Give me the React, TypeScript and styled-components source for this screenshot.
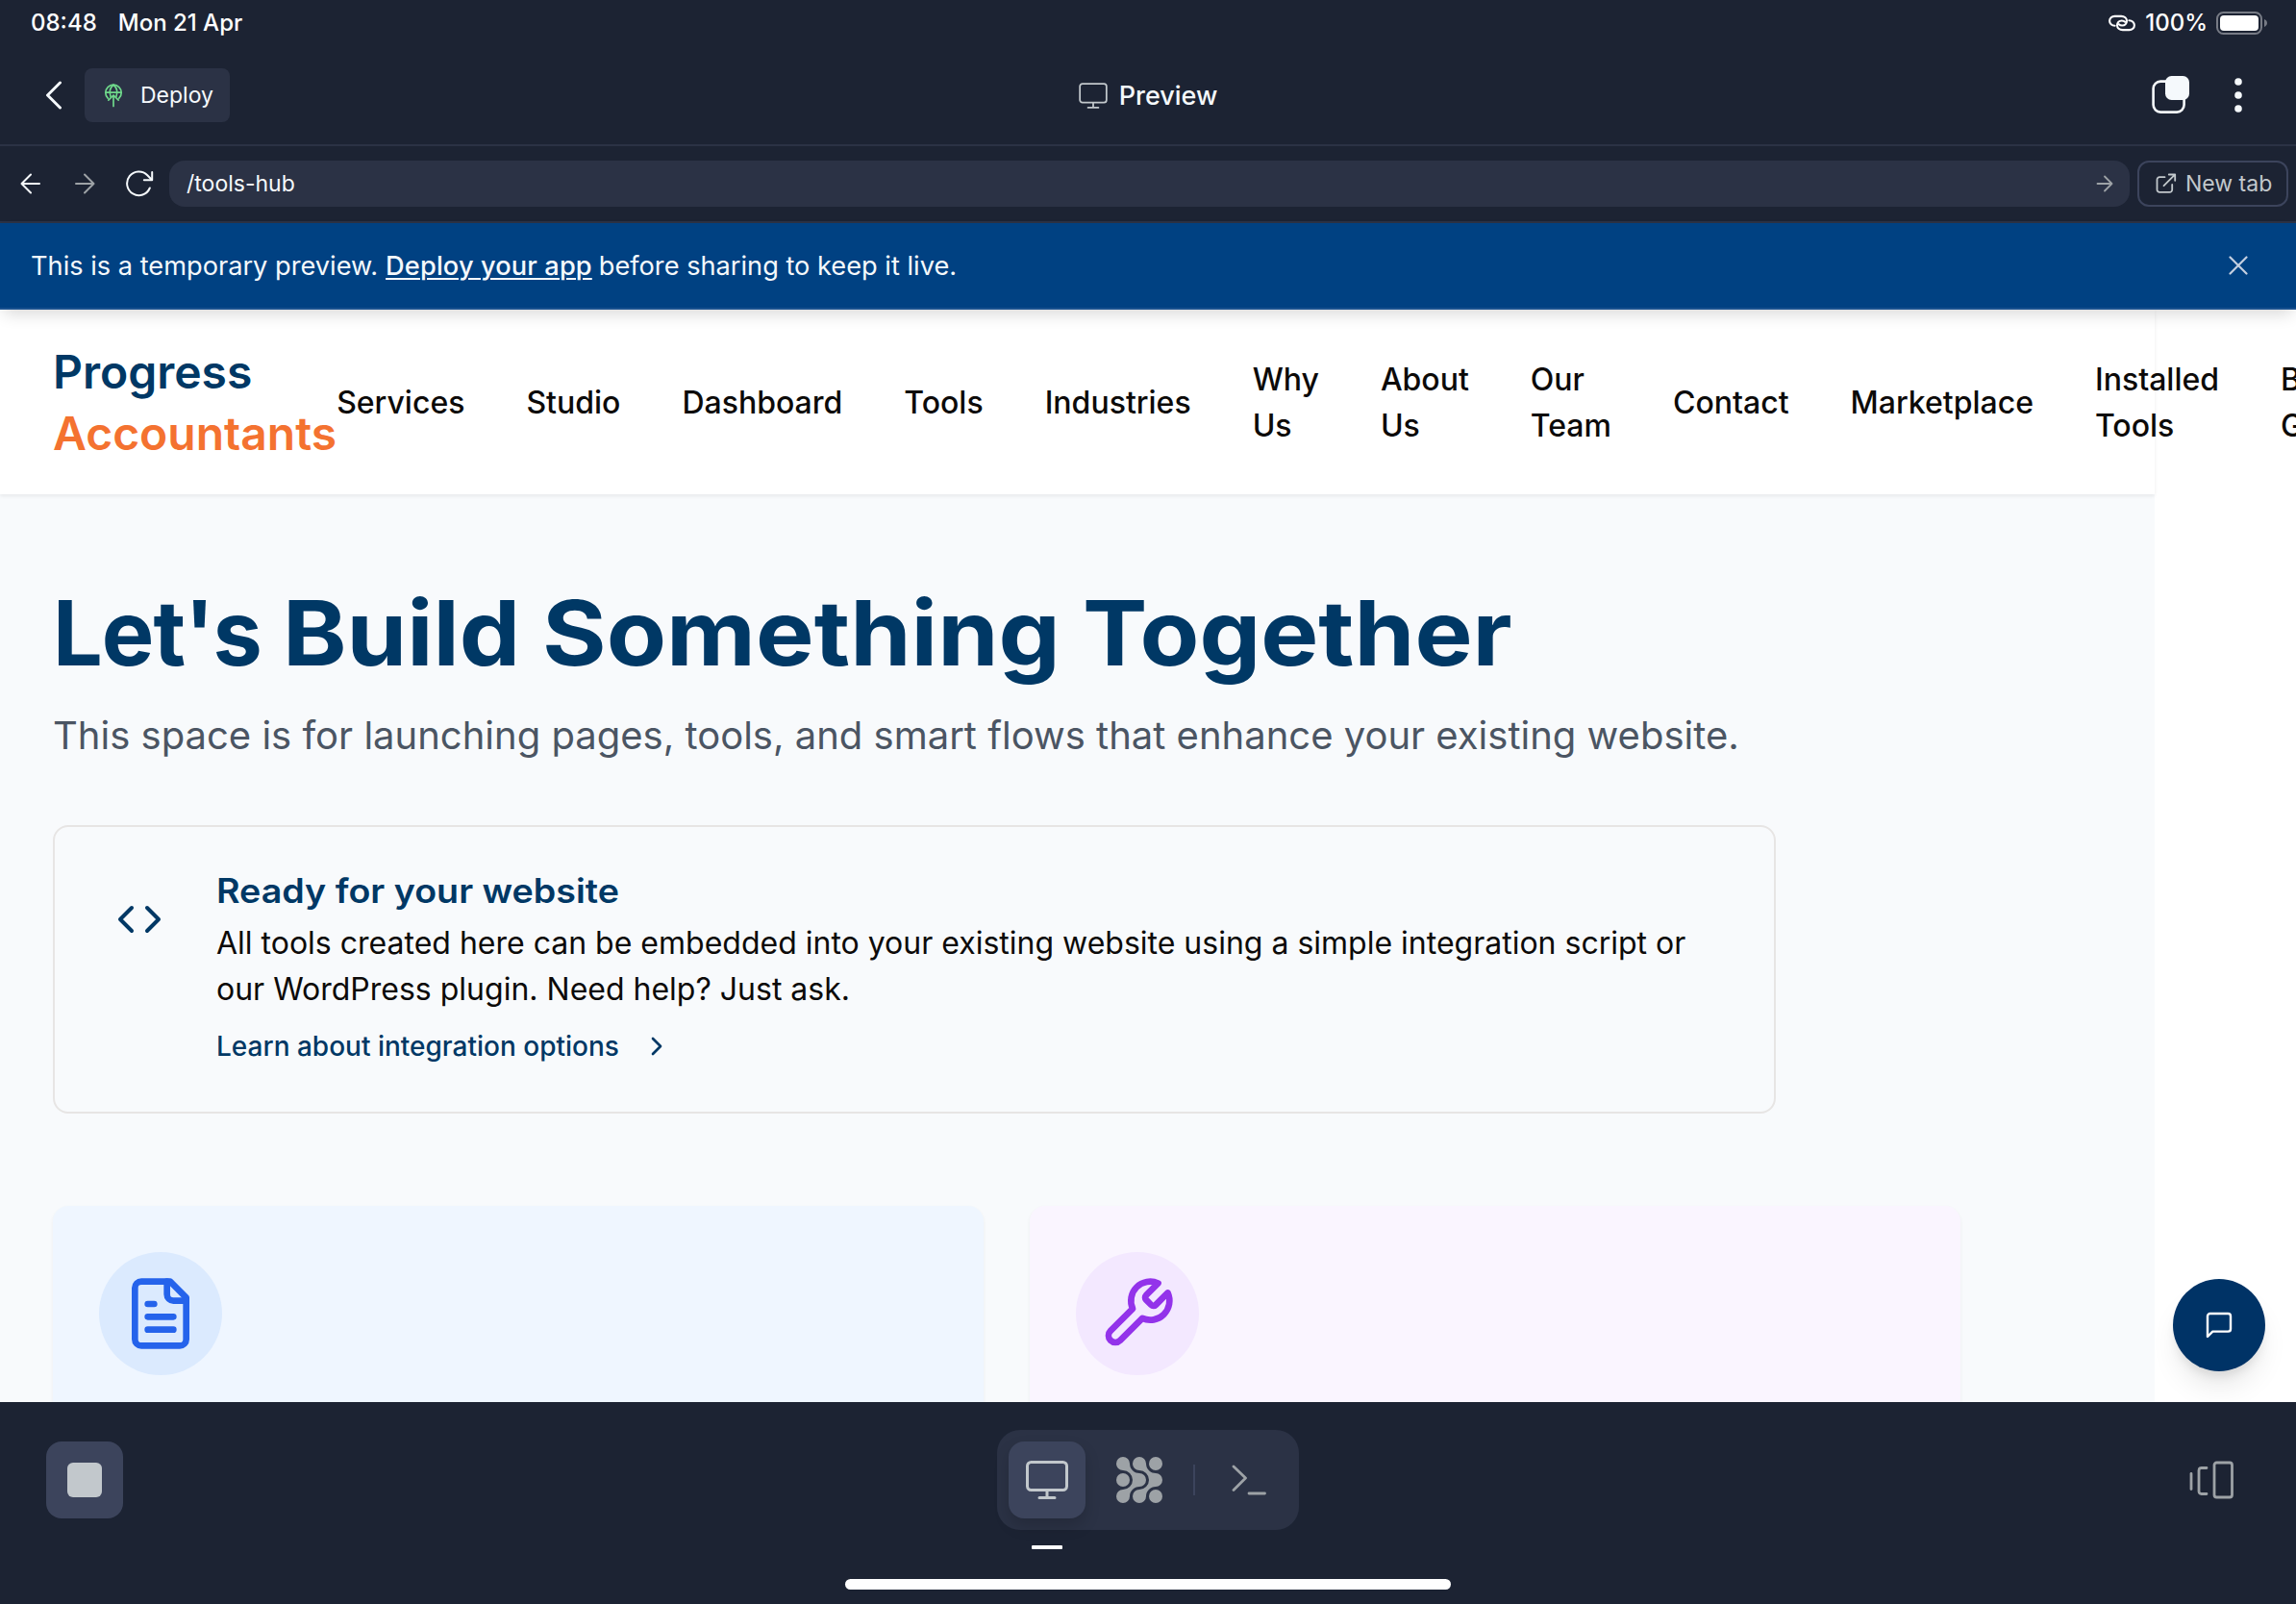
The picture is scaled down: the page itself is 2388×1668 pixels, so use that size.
import React from 'react';
import styled, { createGlobalStyle } from 'styled-components';

const Global = createGlobalStyle`
  * { box-sizing: border-box; }
  body { margin: 0; background: #1c2333; font-family: Inter, "Liberation Sans", sans-serif; overflow: hidden; }
  svg { display: block; flex: none; }
`;

const Screen = styled.div`
  display: flex;
  flex-direction: column;
  width: 2388px;
  height: 1668px;
  background: #1c2333;
  overflow: hidden;
`;

/* ---------- Status bar ---------- */
const StatusBar = styled.div`
  display: flex;
  align-items: center;
  height: 48px;
  padding: 0 29px 1px 32px;
  color: #fff;
  font-size: 24px;
  font-weight: 500;
`;
const StatusText = styled.span<{ $before?: number; $after?: number }>`
  margin: 0 ${(p) => p.$after ?? 0}px 0 ${(p) => p.$before ?? 0}px;
  white-space: nowrap;
`;
const Spacer = styled.div`
  flex: 1;
`;

/* ---------- Title bar ---------- */
const TitleBar = styled.header`
  display: grid;
  grid-template-columns: 1fr auto 1fr;
  align-items: center;
  height: 104px;
  padding: 0 47px;
  border-bottom: 2px solid #2b3245;
`;
const TitleSide = styled.div<{ $end?: boolean }>`
  display: flex;
  align-items: center;
  justify-content: ${(p) => (p.$end ? 'flex-end' : 'flex-start')};
  gap: ${(p) => (p.$end ? 46 : 23)}px;
  padding-right: ${(p) => (p.$end ? 9 : 0)}px;
`;
const DeployButton = styled.button`
  display: flex;
  align-items: center;
  gap: 18px;
  width: 151px;
  height: 56px;
  padding: 0 0 0 20px;
  border: 0;
  border-radius: 8px;
  background: #2b3245;
  color: #f5f9fc;
  font: 400 23px Inter, sans-serif;
`;
const Title = styled.div`
  display: flex;
  align-items: center;
  gap: 12px;
  color: #f5f9fc;
  font-size: 27px;
  font-weight: 500;
`;

/* ---------- Browser bar ---------- */
const BrowserBar = styled.div`
  display: flex;
  align-items: center;
  height: 80px;
  padding: 0 8px 0 20px;
  border-bottom: 2px solid #2b3245;
`;
const NavIcons = styled.div`
  display: grid;
  grid-template-columns: 56px 53px 32px;
  align-items: center;
  width: 156px;
`;
const UrlField = styled.div`
  display: flex;
  align-items: center;
  justify-content: space-between;
  flex: 1;
  height: 48px;
  padding: 0 17px 0 18px;
  border-radius: 16px;
  background: #2b3245;
  color: #f5f9fc;
  font-size: 23px;
`;
const NewTab = styled.button`
  display: flex;
  align-items: center;
  gap: 9px;
  width: 157px;
  height: 48px;
  margin-left: 8px;
  padding: 0 0 0 17px;
  border: 2px solid #3c445c;
  border-radius: 12px;
  background: transparent;
  color: #c2c8cc;
  font: 400 23px Inter, sans-serif;
  white-space: nowrap;
`;

/* ---------- Banner ---------- */
const Banner = styled.div`
  position: relative;
  z-index: 2;
  display: flex;
  align-items: center;
  flex: none;
  height: 90px;
  padding: 0 50px 0 32px;
  background: #004182;
  border-bottom: 2px solid #1a5290;
  box-shadow: 0 8px 16px -4px rgba(0, 0, 0, 0.16);
  color: #f5f9fc;
  font-size: 27.2px;
`;
const DeployLink = styled.a`
  margin: 0 7px 0 8px;
  font-weight: 500;
  letter-spacing: 0.13px;
  text-decoration: underline;
  text-decoration-thickness: 2px;
  text-underline-offset: 3px;
`;

/* ---------- Previewed page ---------- */
const Viewport = styled.div`
  position: relative;
  flex: none;
  height: 1136px;
  background: #fff;
  overflow: hidden;
`;
const Page = styled.div`
  width: 2241px;
  height: 1136px;
  background: #f8fafc;
`;
const SiteHeader = styled.div`
  position: relative;
  display: flex;
  align-items: center;
  width: 2241px;
  height: 192px;
  padding: 2px 55px 0;
  background: #fff;
  box-shadow: 0 2px 4px rgba(0, 0, 0, 0.07);
`;
const Logo = styled.div`
  display: flex;
  flex-direction: column;
  flex: none;
  font-size: 48px;
  font-weight: 600;
  line-height: 64px;
`;
const LogoWord = styled.span<{ $accent?: boolean }>`
  color: ${(p) => (p.$accent ? '#f47230' : '#003865')};
`;
const SiteNav = styled.nav`
  display: flex;
  align-items: center;
  gap: 64px;
  flex: none;
`;
const NavItem = styled.a`
  width: min-content;
  color: #0c0a09;
  font-size: 32px;
  font-weight: 500;
  line-height: 48px;
`;
const Main = styled.main`
  padding: 96px 55px 0;
`;
const Headline = styled.h1`
  display: flex;
  margin: 0;
  color: #003865;
  font-size: 94px;
  font-weight: 700;
  line-height: 96px;
  white-space: pre;
`;
const HeadWord = styled.span<{ $w: number; $stretch: number; $track?: number }>`
  flex: none;
  width: ${(p) => p.$w}px;
  letter-spacing: ${(p) => p.$track ?? 0}px;
  transform: scaleX(${(p) => p.$stretch});
  transform-origin: left;
`;
const Lead = styled.p`
  margin: 31px 0 0;
  color: #4b5563;
  font-size: 40px;
  line-height: 56px;
  white-space: nowrap;
`;
const InfoCard = styled.section`
  display: flex;
  gap: 56px;
  width: 1792px;
  height: 300px;
  margin-top: 65px;
  padding: 46px 64px 0;
  border: 2px solid #e7e5e4;
  border-radius: 16px;
`;
const InfoIcon = styled.div`
  padding-top: 26px;
`;
const InfoBody = styled.div`
  display: flex;
  flex-direction: column;
`;
const InfoTitle = styled.h3`
  margin: 0 0 11px;
  color: #003865;
  font-size: 35px;
  font-weight: 600;
  line-height: 40px;
  transform: scaleX(1.075);
  transform-origin: left;
`;
const InfoText = styled.p`
  margin: 0;
  width: 1550px;
  color: #0c0a09;
  font-size: 32px;
  line-height: 48px;
`;
const InfoLink = styled.a`
  display: flex;
  align-items: center;
  gap: 23px;
  height: 40px;
  margin-top: 15px;
  color: #003865;
  font-size: 28px;
  font-weight: 500;
`;
const CardGrid = styled.div`
  display: grid;
  grid-template-columns: 968px 968px;
  gap: 48px;
  margin-top: 96px;
`;
const ToolCard = styled.div<{ $bg: string }>`
  height: 320px;
  padding: 48px;
  border-radius: 16px;
  background: ${(p) => p.$bg};
  box-shadow: 0 2px 4px rgba(0, 0, 0, 0.05);
`;
const Medallion = styled.div<{ $bg: string }>`
  display: flex;
  align-items: center;
  justify-content: center;
  width: 128px;
  height: 128px;
  border-radius: 50%;
  background: ${(p) => p.$bg};
`;
const ChatButton = styled.button`
  position: absolute;
  right: 32px;
  bottom: 32px;
  display: flex;
  align-items: center;
  justify-content: center;
  width: 96px;
  height: 96px;
  padding: 0;
  border: 0;
  border-radius: 50%;
  background: #003366;
  box-shadow: 0 20px 30px -6px rgba(0, 0, 0, 0.1), 0 8px 12px -4px rgba(0, 0, 0, 0.1);
`;

/* ---------- Bottom bar ---------- */
const BottomBar = styled.footer`
  display: flex;
  flex-direction: column;
  align-items: center;
  flex: 1;
  padding: 29px 0 0;
`;
const BottomRow = styled.div`
  display: grid;
  grid-template-columns: 1fr auto 1fr;
  align-items: center;
  width: 100%;
  padding: 0 48px;
`;
const StopButton = styled.button`
  display: flex;
  align-items: center;
  justify-content: center;
  width: 80px;
  height: 80px;
  padding: 0;
  border: 0;
  border-radius: 16px;
  background: #3c445c;
`;
const StopGlyph = styled.i`
  width: 36px;
  height: 36px;
  border-radius: 6px;
  background: #c2c8cc;
`;
const TabGroup = styled.div`
  display: flex;
  align-items: center;
  gap: 16px;
  height: 104px;
  padding: 0 12px;
  border-radius: 24px;
  background: #2b3245;
`;
const TabButton = styled.button<{ $active?: boolean }>`
  position: relative;
  display: flex;
  align-items: center;
  justify-content: center;
  width: 80px;
  height: 80px;
  padding: 0;
  border: 0;
  border-radius: 16px;
  background: ${(p) => (p.$active ? '#3c445c' : 'transparent')};
  box-shadow: ${(p) => (p.$active ? '0 8px 16px rgba(2, 2, 3, 0.16)' : 'none')};
`;
const ActiveMark = styled.i`
  position: absolute;
  left: 24px;
  bottom: -32px;
  width: 32px;
  height: 4px;
  border-radius: 1px;
  background: #fff;
`;
const TabDivider = styled.i`
  width: 2px;
  height: 32px;
  background: #3c445c;
`;
const RightTools = styled.div`
  display: flex;
  justify-content: flex-end;
  padding-right: 17px;
`;
const HomeIndicator = styled.div`
  width: 630px;
  height: 11px;
  margin-top: 51px;
  border-radius: 6px;
  background: #fff;
`;

/* ---------- Icons ---------- */
type LineProps = { w: number; h: number; sw?: number; color?: string; box?: string; children: React.ReactNode };
const Line = ({ w, h, sw = 2, color = '#f5f9fc', box, children }: LineProps) => (
  <svg width={w} height={h} viewBox={box ?? `0 0 ${w} ${h}`} fill="none" stroke={color} strokeWidth={sw} strokeLinecap="round" strokeLinejoin="round">
    {children}
  </svg>
);

const Hotspot = () => {
  const loop = 'M6.6 11.8C3.4 11.8 1.1 9.6 1.1 6.8C1.1 4 3.4 1.9 6.4 1.9H13.2C16.7 1.9 19 4 19 6.7C19 9.5 16.9 11.5 14.2 11.5C12.8 11.5 11.6 11 10.8 10.2';
  return (
    <Line w={28} h={18} sw={2.1} color="#fff">
      <path d={loop} />
      <path d={loop} transform="rotate(180 14 9)" />
    </Line>
  );
};

const Battery = () => (
  <svg width="54" height="24" viewBox="0 0 54 24">
    <rect x="1" y="1" width="46" height="22" rx="6.5" fill="none" stroke="#777b85" strokeWidth="2" />
    <rect x="4" y="4" width="40" height="16" rx="4" fill="#fff" />
    <path d="M50 8c1.8.7 3 2.3 3 4s-1.2 3.3-3 4z" fill="#777b85" />
  </svg>
);

const GlobeUp = () => (
  <Line w={20} h={26} sw={1.7} color="#6fd98b">
    <path d="M4.2 16.2A8.2 8.2 0 1 1 15.8 16.2" />
    <path d="M2 10.2H18" />
    <path d="M7 14.2C5.6 9.5 6.6 4.8 10 2.2C13.4 4.8 14.4 9.5 13 14.2" />
    <path d="M10 24.5V13.5M4.8 18.2L10 13L15.2 18.2" />
  </Line>
);

const Monitor = ({ w, h, sw }: { w: number; h: number; sw: number }) => (
  <Line w={w} h={h} sw={sw} color="#c2c8cc" box="0 0 44 40">
    <rect x="1.5" y="1.5" width="41" height="29" rx="4" />
    <path d="M22 31V38M14 38.4H30" />
  </Line>
);

const Overlay = () => (
  <svg width="40" height="40" viewBox="0 0 40 40">
    <rect x="1.6" y="5.6" width="32" height="32" rx="7.5" fill="none" stroke="#f5f9fc" strokeWidth="2.6" />
    <rect x="14" y="0" width="25" height="25" rx="6.5" fill="#f5f9fc" />
  </svg>
);

const Dots = () => (
  <svg width="8" height="36" viewBox="0 0 8 36" fill="#f5f9fc">
    <circle cx="4" cy="4" r="3.8" />
    <circle cx="4" cy="18" r="3.8" />
    <circle cx="4" cy="32" r="3.8" />
  </svg>
);

const GoArrow = () => (
  <Line w={18} h={18} color="#9da2a6" sw={1.8}>
    <path d="M1.500 9H16.500M9 1.500L16.500 9L9 16.500" />
  </Line>
);

const Reload = () => (
  <Line w={32} h={28}>
    <path d="M26.8 18.5A12.3 12.3 0 1 1 24.3 5.3L28.7 9.8" />
    <path d="M29.2 2V10.3H20.8" />
  </Line>
);

const External = () => (
  <Line w={22} h={22} color="#c2c8cc" sw={1.8}>
    <path d="M9.5 4.2H4.2A2.6 2.6 0 0 0 1.5 6.800V17.2A2.6 2.6 0 0 0 4.2 19.8H14.6A2.6 2.6 0 0 0 17.2 17.2V12" />
    <path d="M8.5 13.2L20 1.7M13.8 1.5H20.2V7.8" />
  </Line>
);

const blob = 'M14 7C14 12.5 18.5 17 24 17A7 7 0 0 1 24 31C18.5 31 14 35.5 14 41A7 7 0 1 1 7 34A10 10 0 0 0 7 14A7 7 0 1 1 14 7Z';
const Blobs = () => (
  <svg width="48" height="48" viewBox="0 0 48 48" fill="#9da2a6">
    <path d={blob} />
    <path d={blob} transform="translate(17 0)" />
    <circle cx="7" cy="24" r="7" />
    <circle cx="41" cy="7" r="7" />
    <circle cx="41" cy="41" r="7" />
  </svg>
);

const navItems = ['Services', 'Studio', 'Dashboard', 'Tools', 'Industries', 'Why Us', 'About Us', 'Our Team', 'Contact', 'Marketplace', 'Installed Tools', 'B G'];

export default function App() {
  return (
    <Screen>
      <Global />
      <StatusBar>
        <StatusText $after={22}>08:48</StatusText>
        <StatusText>Mon 21 Apr</StatusText>
        <Spacer />
        <Hotspot />
        <StatusText $before={10} $after={9}>100%</StatusText>
        <Battery />
      </StatusBar>

      <TitleBar>
        <TitleSide>
          <Line w={18} h={30} sw={3}>
            <path d="M15.5 2L2.5 15L15.5 28" />
          </Line>
          <DeployButton>
            <GlobeUp />
            Deploy
          </DeployButton>
        </TitleSide>
        <Title>
          <Monitor w={30} h={27} sw={2.6} />
          Preview
        </Title>
        <TitleSide $end>
          <Overlay />
          <Dots />
        </TitleSide>
      </TitleBar>

      <BrowserBar>
        <NavIcons>
          <Line w={24} h={24}>
            <path d="M21 12H2.5M12 2.5L2.5 12L12 21.5" />
          </Line>
          <Line w={24} h={24} color="#9da2a6">
            <path d="M3 12H21.5M12 2.5L21.5 12L12 21.5" />
          </Line>
          <Reload />
        </NavIcons>
        <UrlField>
          /tools-hub
          <GoArrow />
        </UrlField>
        <NewTab>
          <External />
          New tab
        </NewTab>
      </BrowserBar>

      <Banner>
        <span>This is a temporary preview.</span>
        <DeployLink>Deploy your app</DeployLink>
        <span>before sharing to keep it live.</span>
        <Spacer />
        <Line w={20} h={20} color="#c4cfe0" sw={2.2}>
          <path d="M1.5 1.5L18.5 18.5M18.5 1.5L1.5 18.5" />
        </Line>
      </Banner>

      <Viewport>
        <Page>
          <SiteHeader>
            <Logo>
              <LogoWord>Progress</LogoWord>
              <LogoWord $accent>Accountants</LogoWord>
            </Logo>
            <SiteNav>
              {navItems.map((n) => (
                <NavItem key={n}>{n}</NavItem>
              ))}
            </SiteNav>
          </SiteHeader>
          <Main>
            <Headline>
              <HeadWord $w={239} $stretch={0.975} $track={-1}>Let's </HeadWord>
              <HeadWord $w={270} $stretch={1.07}>Build </HeadWord>
              <HeadWord $w={562} $stretch={1.083}>Something </HeadWord>
              <HeadWord $w={430} $stretch={1.074}>Together</HeadWord>
            </Headline>
            <Lead>This space is for launching pages, tools, and smart flows that enhance your existing website.</Lead>
            <InfoCard>
              <InfoIcon>
                <Line w={48} h={48} color="#003865" box="0 0 24 24">
                  <path d="M16 18l6-6-6-6M8 6l-6 6 6 6" />
                </Line>
              </InfoIcon>
              <InfoBody>
                <InfoTitle>Ready for your website</InfoTitle>
                <InfoText>
                  All tools created here can be embedded into your existing website using a simple integration script or our WordPress plugin. Need help? Just ask.
                </InfoText>
                <InfoLink>
                  Learn about integration options
                  <Line w={32} h={32} color="#003865" box="0 0 24 24">
                    <path d="M9 18l6-6-6-6" />
                  </Line>
                </InfoLink>
              </InfoBody>
            </InfoCard>
            <CardGrid>
              <ToolCard $bg="#eff6ff">
                <Medallion $bg="#dbeafe">
                  <Line w={80} h={80} color="#2563eb" box="0 0 24 24">
                    <path d="M15 2H6a2 2 0 0 0-2 2v16a2 2 0 0 0 2 2h12a2 2 0 0 0 2-2V7Z" />
                    <path d="M14 2v4a2 2 0 0 0 2 2h4" />
                    <path d="M10 9H8M16 13H8M16 17H8" />
                  </Line>
                </Medallion>
              </ToolCard>
              <ToolCard $bg="#faf5ff">
                <Medallion $bg="#f3e8ff">
                  <Line w={80} h={80} color="#9333ea" box="0 0 24 24">
                    <path d="M14.7 6.3a1 1 0 0 0 0 1.4l1.6 1.6a1 1 0 0 0 1.4 0l3.77-3.77a6 6 0 0 1-7.94 7.94l-6.91 6.91a2.12 2.12 0 0 1-3-3l6.91-6.91a6 6 0 0 1 7.94-7.94l-3.76 3.76z" />
                  </Line>
                </Medallion>
              </ToolCard>
            </CardGrid>
          </Main>
        </Page>
        <ChatButton>
          <Line w={32} h={32} color="#fff" box="0 0 24 24" sw={1.8}>
            <path d="M21 15a2 2 0 0 1-2 2H7l-4 4V5a2 2 0 0 1 2-2h14a2 2 0 0 1 2 2z" />
          </Line>
        </ChatButton>
      </Viewport>

      <BottomBar>
        <BottomRow>
          <StopButton>
            <StopGlyph />
          </StopButton>
          <TabGroup>
            <TabButton $active>
              <Monitor w={44} h={40} sw={3} />
              <ActiveMark />
            </TabButton>
            <TabButton>
              <Blobs />
            </TabButton>
            <TabDivider />
            <TabButton>
              <Line w={36} h={32} color="#9da2a6" sw={2.8}>
                <path d="M2 2L14.5 14L2 26.5M18 30H34.5" />
              </Line>
            </TabButton>
          </TabGroup>
          <RightTools>
            <Line w={46} h={40} color="#9da2a6" sw={2.8}>
              <path d="M2 13.5V29.5" />
              <path d="M18 7.5H12.5A2.5 2.5 0 0 0 10 10V32A2.5 2.5 0 0 0 12.5 34.5H18" />
              <rect x="26" y="2" width="18.5" height="36" rx="2.5" />
            </Line>
          </RightTools>
        </BottomRow>
        <HomeIndicator />
      </BottomBar>
    </Screen>
  );
}
